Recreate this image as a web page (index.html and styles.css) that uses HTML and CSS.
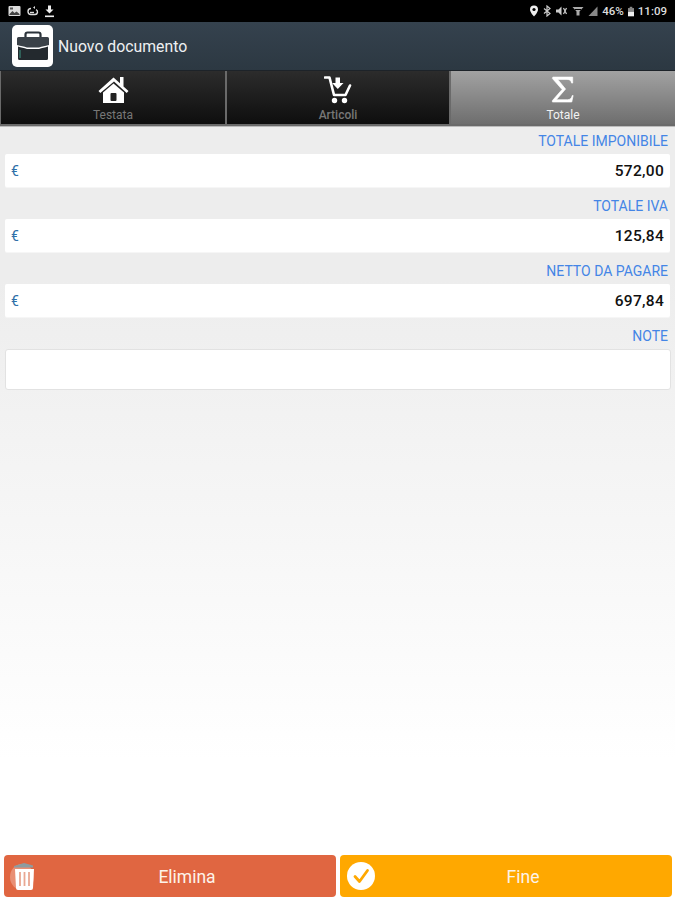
FILE: index.html
```html
<!DOCTYPE html>
<html lang="it">
<head>
<meta charset="utf-8">
<title>Nuovo documento</title>
<link rel="stylesheet" href="styles.css">
</head>
<body>
<div class="page">
  <div class="status">
    <div class="status-group">
      <svg class="st-icon" width="13" height="12" viewBox="0 0 13 12"><rect x="0.5" y="1" width="12" height="10" rx="1" fill="#ddd"/><path d="M1.5 9l3-3 2 2 2-1.500 3 2.500v1h-10z" fill="#444"/><rect x="2" y="2.500" width="3" height="2" fill="#555"/></svg>
      <svg class="st-icon" width="13" height="12" viewBox="0 0 13 12"><path d="M5 3.500a3 3 0 1 0 0 6h4a2.500 2.500 0 0 0 1-4.800" fill="none" stroke="#ddd" stroke-width="1.400"/><path d="M7 2.500l2-1.500v3z" fill="#ddd"/><path d="M8 7.500h-4" stroke="#ddd" stroke-width="1.400"/></svg>
      <svg class="st-icon" width="11" height="13" viewBox="0 0 11 13"><path d="M4 0.500h3v4h2.500l-4 4-4-4h2.500z" fill="#eee"/><rect x="1" y="10.500" width="9" height="1.600" fill="#eee"/></svg>
    </div>
    <div class="status-group status-right">
      <svg class="st-icon" width="10" height="12" viewBox="0 0 10 12"><path d="M5 0.500a4 4 0 0 1 4 4c0 3-4 7-4 7s-4-4-4-7a4 4 0 0 1 4-4z" fill="#eee"/><circle cx="5" cy="4.500" r="1.600" fill="#000"/></svg>
      <svg class="st-icon" width="8" height="12" viewBox="0 0 8 12"><path d="M1 3.500l6 5-3 2.500v-10l3 2.500-6 5" fill="none" stroke="#ccc" stroke-width="1.200"/></svg>
      <svg class="st-icon" width="13" height="12" viewBox="0 0 13 12"><path d="M1 4.500h2.500l3-3v9l-3-3h-2.500z" fill="#ccc"/><path d="M8.500 3l3 6M11.500 3l-3 6" stroke="#ccc" stroke-width="1.200"/></svg>
      <svg class="st-icon" width="12" height="12" viewBox="0 0 12 12"><path d="M0.500 2h11l-4 4.500v4h-3v-4z" fill="#aaa"/><path d="M3 4.500h6" stroke="#000"/></svg>
      <svg class="st-icon" width="10" height="12" viewBox="0 0 10 12"><path d="M9.500 1.500v9.500h-9z" fill="#888"/></svg>
      <span class="st-text">46%</span>
      <svg class="st-icon" width="6" height="11" viewBox="0 0 7 11"><rect x="2" y="0" width="3" height="2" fill="#888"/><rect x="0" y="1.500" width="7" height="9.500" fill="#888"/><rect x="0" y="6" width="7" height="5" fill="#eee"/></svg>
      <span class="st-text">11:09</span>
    </div>
  </div>

  <header class="appbar">
    <div class="logo">
      <svg width="34" height="30" viewBox="0 0 34 30">
        <path d="M9.500 8v-4.500a2 2 0 0 1 2-2h11a2 2 0 0 1 2 2v4.500" fill="none" stroke="#2b333a" stroke-width="2.200"/>
        <path d="M1 7.500a1.500 1.500 0 0 1 1.500-1.500h29a1.500 1.500 0 0 1 1.500 1.500v6.500c-4 1.500-7 1-10 2.500h-12c-3-1.500-6-1-10-2.500z" fill="#3a4148"/>
        <path d="M2 15.500c3 1.200 6 1 9 2.500h12c3-1.500 6-1.300 9-2.500v12a1.500 1.500 0 0 1-1.500 1.500h-27a1.500 1.500 0 0 1-1.500-1.500z" fill="#23292e"/>
        <rect x="3" y="19" width="2" height="8" fill="#2f5f58"/>
      </svg>
    </div>
    <span class="title">Nuovo documento</span>
  </header>

  <nav class="tabs">
    <div class="tab">
      <svg class="tab-icon" width="31" height="28" viewBox="0 0 31 28">
        <path d="M0.500 15l15-13.500 6.500 5.800v-6.300h3.500v9.500l5 4.500-1.800 2-12.700-11.500-13.700 11.500z" fill="#fff"/>
        <path d="M5 16.500l10.500-9 10.500 9v10.500h-21z" fill="#fff"/>
        <rect x="12.500" y="17" width="6" height="8" rx="1" fill="#222"/>
      </svg>
      <span class="tab-label">Testata</span>
    </div>
    <div class="tab">
      <svg class="tab-icon" width="28" height="28" viewBox="0 0 28 28">
        <path d="M1 1.500h4.500l4.500 17.500h11.500l4.500-9.500" fill="none" stroke="#fff" stroke-width="2.600" stroke-linecap="round" stroke-linejoin="round"/>
        <path d="M11.500 1.500h4.500v5.500h3.500l-5.700 6-5.700-6h3.400z" fill="#fff"/>
        <circle cx="10.500" cy="24.500" r="2.700" fill="#fff"/>
        <circle cx="20.500" cy="24.500" r="2.700" fill="#fff"/>
      </svg>
      <span class="tab-label bold">Articoli</span>
    </div>
    <div class="tab active">
      <svg class="tab-icon" width="24" height="30" viewBox="0 0 26 30">
        <path d="M2 1h21.500v6.500l-1.200 0c-.5-2.500-1.500-4-5-4h-10l8.500 10.500-10 11.500h12c3 0 4.500-1.500 5.200-4.500l1 0-1.500 7h-21v-1.500l10.500-12-10.500-12z" fill="#fff" stroke="#fff" stroke-width="0.700"/>
      </svg>
      <span class="tab-label">Totale</span>
    </div>
  </nav>

  <main class="content">
    <div class="field-label">TOTALE IMPONIBILE</div>
    <div class="field"><span class="euro">€</span><span class="value">572,00</span></div>
    <div class="field-label">TOTALE IVA</div>
    <div class="field"><span class="euro">€</span><span class="value">125,84</span></div>
    <div class="field-label">NETTO DA PAGARE</div>
    <div class="field"><span class="euro">€</span><span class="value">697,84</span></div>
    <div class="field-label">NOTE</div>
    <div class="field note"></div>
  </main>

  <footer class="actions">
    <div class="btn btn-delete">
      <svg class="btn-icon trash" width="28" height="32" viewBox="0 0 28 32">
        <ellipse cx="13" cy="17" rx="12" ry="13" fill="#e98f74"/>
        <path d="M5 6l10-3 9 2.500v2h-19z" fill="#8d9ca0"/>
        <path d="M6 9h19l-1 19a2 2 0 0 1-2 2h-13a2 2 0 0 1-2-2z" fill="#fff"/>
        <path d="M11 12v14M15.500 12v14M20 12v14" stroke="#e9a893" stroke-width="1.800"/>
      </svg>
      <span>Elimina</span>
    </div>
    <div class="btn btn-done">
      <svg class="btn-icon check" width="28" height="28" viewBox="0 0 28 28">
        <circle cx="14" cy="14" r="14" fill="#fff"/>
        <path d="M8 14.500l4.500 5 8-11" fill="none" stroke="#ffa800" stroke-width="2.800" stroke-linecap="round" stroke-linejoin="round"/>
      </svg>
      <span>Fine</span>
    </div>
  </footer>
</div>
</body>
</html>
```

FILE: styles.css
```css
* { box-sizing: border-box; }
html, body { margin: 0; height: 100%; }
body { font-family: Roboto, "Liberation Sans", sans-serif; }

.page {
  width: 675px;
  height: 900px;
  display: flex;
  flex-direction: column;
  overflow: hidden;
  background: linear-gradient(to bottom, #ededed 0, #ededed 280px, #ffffff 760px);
}

.status {
  flex: 0 0 22px;
  background: #000;
  display: flex;
  justify-content: space-between;
  align-items: center;
  padding: 0 8px;
  color: #ddd;
}
.status-group { display: flex; align-items: center; gap: 5px; }
.status-right { gap: 4px; }
.st-icon { display: block; }
.st-text { font-size: 11.500px; font-weight: 500; color: #ddd; }

.appbar {
  flex: 0 0 48px;
  background: linear-gradient(to bottom, #35424e, #2c3842);
  display: flex;
  align-items: center;
  padding-left: 12px;
  gap: 5px;
}
.logo {
  width: 41px;
  height: 42px;
  background: #fff;
  border-radius: 5px;
  display: flex;
  align-items: center;
  justify-content: center;
}
.title { color: #eef0f2; font-size: 15.800px; }

.tabs {
  flex: 0 0 57px;
  display: grid;
  grid-template-columns: 224px 222px 224px;
  column-gap: 2px;
  background: #6a6a6a;
  border-top: 1px solid #1d2329;
  border-bottom: 1px solid #bbb;
  padding: 0 0 2px 1px;
}
.tab {
  background: linear-gradient(to bottom, #2c2c2c, #0e0e0e);
  display: flex;
  flex-direction: column;
  align-items: center;
  padding-top: 5px;
  height: 53px;
}
.tab.active { background: linear-gradient(to bottom, #a2a2a2, #6e6e6e); }
.tab-icon { display: block; flex: 0 0 auto; }
.tab-label { font-size: 12px; line-height: 14px; color: #777; margin-top: 4px; }
.tab-label.bold { font-weight: 500; }
.tab.active .tab-icon { margin-top: -1px; margin-bottom: -1px; }
.tab.active .tab-label { color: #f2f2f2; }

.content { flex: 1 1 auto; padding: 5px 5px 0; }
.field-label {
  height: 22px;
  text-align: right;
  padding-right: 2px;
  font-size: 14px;
  line-height: 19px;
  color: #4485e6;
}
.field {
  height: 33px;
  margin-bottom: 10px;
  background: #fff;
  border-radius: 2px;
  display: flex;
  justify-content: space-between;
  align-items: center;
  padding: 1px 6px 0;
  box-shadow: 0 1px 0 #f6f6f6;
}
.euro { font-size: 14px; color: #2f6fa8; }
.value { font-size: 15.500px; font-weight: 500; letter-spacing: 0.3px; color: #111; }
.field.note {
  height: 41px;
  margin-bottom: 0;
  margin-right: -1px;
  border: 1px solid #e2e2e2;
  border-radius: 3px;
  box-shadow: none;
}

.actions {
  flex: 0 0 48px;
  display: grid;
  grid-template-columns: 332px 332px;
  column-gap: 4px;
  padding: 3px 0 3px 4px;
}
.btn {
  position: relative;
  border-radius: 4px;
  display: flex;
  align-items: center;
  justify-content: center;
  padding: 1px 0 0 34px;
  color: #fdf3ea;
  font-size: 17.500px;
}
.btn-delete { background: #e06641; }
.btn-done { background: #ffa800; }
.btn-icon { position: absolute; top: 50%; transform: translateY(-50%); }
.trash { left: 5px; }
.check { left: 7px; }
```
